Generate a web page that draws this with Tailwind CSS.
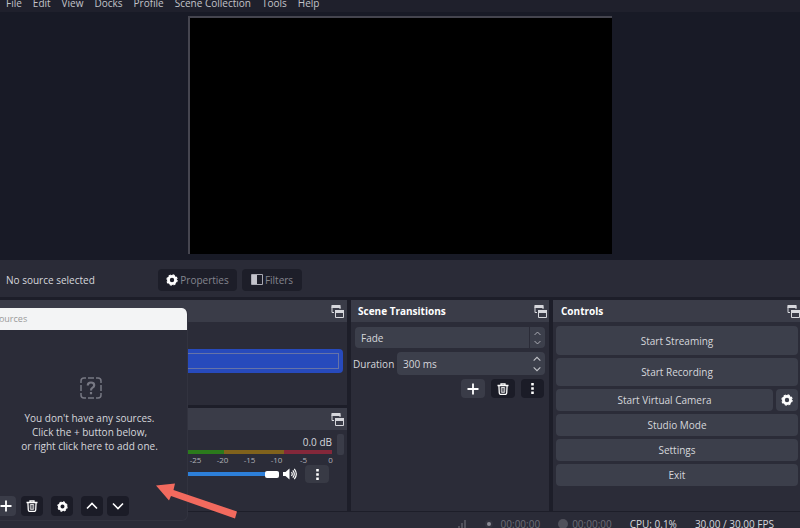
<!DOCTYPE html>
<html lang="en">
<head>
    <meta charset="UTF-8">
    <meta name="viewport" content="width=device-width, initial-scale=1.0">
    <title>OBS Studio</title>
    <script src="https://cdn.jsdelivr.net/npm/@tailwindcss/browser@4"></script>
</head>
<body class="relative flex h-screen flex-col overflow-hidden bg-[#1d1e29] font-['Open_Sans',sans-serif] text-[10px] leading-4 text-[#d6d7dc]">
    <!-- Shared icons -->
    <svg class="hidden">
        <symbol id="popout" viewBox="0 0 13 13">
            <path d="M1 1.500h8v6H1z" fill="none" stroke="currentColor"/>
            <path d="M.5 0h9v3h-9z" fill="currentColor"/>
            <path d="M3 4h10v9H3z" fill="#3a3c48"/>
            <path d="M4.500 6.500h8v6h-8z" fill="none" stroke="currentColor"/>
            <path d="M4 5h9v3H4z" fill="currentColor"/>
        </symbol>
        <symbol id="gear" viewBox="0 0 12 12">
            <circle cx="6" cy="6" r="3.600" fill="none" stroke="currentColor" stroke-width="2.800"/>
            <circle cx="6" cy="6" r="5.100" fill="none" stroke="currentColor" stroke-width="1.200" stroke-dasharray="2.200 1.805"/>
        </symbol>
        <symbol id="plus" viewBox="0 0 12 12">
            <path d="M6 .5v11M.5 6h11" stroke="currentColor" stroke-width="1.800"/>
        </symbol>
        <symbol id="trash" viewBox="0 0 12 12">
            <path d="M.5 2.500h11M4 2.500V.8h4v1.700M1.900 2.500l.4 7.500q.1 1.400 1.400 1.400h4.600q1.300 0 1.400-1.400l.4-7.500" fill="none" stroke="currentColor" stroke-width="1.300"/>
            <path d="M4.300 4.500h3.400v4.800H4.300zM6 4.500v4.800" fill="none" stroke="currentColor" stroke-width=".8"/>
        </symbol>
        <symbol id="dots" viewBox="0 0 12 12">
            <path d="M4.600 0h2.800v2.800H4.600zM4.600 4.600h2.800v2.800H4.600zM4.600 9.200h2.800V12H4.600z" fill="currentColor"/>
        </symbol>
        <symbol id="up" viewBox="0 0 12 12">
            <path d="M1 8.500l5-5 5 5" fill="none" stroke="currentColor" stroke-width="1.600"/>
        </symbol>
        <symbol id="down" viewBox="0 0 12 12">
            <path d="M1 3.500l5 5 5-5" fill="none" stroke="currentColor" stroke-width="1.600"/>
        </symbol>
    </svg>

    <!-- Menu bar -->
    <nav class="flex h-3 shrink-0 items-end gap-[11px] bg-[#1f202c] pb-px pl-1.5 text-[#c3c4ca]">
        <a href="#">File</a>
        <a href="#">Edit</a>
        <a href="#">View</a>
        <a href="#">Docks</a>
        <a href="#">Profile</a>
        <a href="#">Scene Collection</a>
        <a href="#">Tools</a>
        <a href="#">Help</a>
    </nav>

    <!-- Preview -->
    <main class="flex min-h-0 flex-1 justify-center bg-[#181a26] pt-1 pb-1.5">
        <div class="aspect-video h-full border-t-2 border-l-2 border-[#45454f] bg-black"></div>
    </main>

    <!-- Source toolbar -->
    <div class="flex h-[37px] shrink-0 items-center bg-[#2a2b37] pt-0.5 pl-1.5">
        <span class="w-[152px]">No source selected</span>
        <button class="mr-[5px] flex h-[22px] w-[79px] items-center justify-center gap-0.5 rounded bg-[#1d1e29] text-[#84858e]">
            <svg class="size-3 text-white"><use href="#gear"/></svg>Properties
        </button>
        <button class="flex h-[22px] w-[60px] items-center justify-center gap-0.5 rounded bg-[#1d1e29] text-[#84858e]">
            <svg class="h-[11px] w-3" viewBox="0 0 12 11"><path d="M.5.5h11v10H.5z" fill="none" stroke="#a9a9b3"/><path d="M1 1h5v9H1z" fill="#c4c4cc"/></svg>Filters
        </button>
    </div>

    <!-- Docks -->
    <div class="mt-[3px] grid h-[211px] shrink-0 grid-cols-[347fr_198fr_247fr] gap-1">
        <div class="flex flex-col gap-[3px]">
            <section class="h-[105px] bg-[#2b2c38]">
                <header class="flex h-[22px] items-center justify-end bg-[#3a3c48] pr-[3px]">
                    <svg class="size-[13px]"><use href="#popout"/></svg>
                </header>
                <div class="mt-[27px] mr-1 h-6 rounded-sm bg-[#274abc] py-1 pr-1">
                    <div class="h-4 border border-[#6673a8]"></div>
                </div>
            </section>
            <section class="flex-1 bg-[#2b2c38]">
                <header class="flex h-[22px] items-center justify-end bg-[#3a3c48] pr-[3px]">
                    <svg class="size-[13px]"><use href="#popout"/></svg>
                </header>
                <div class="mt-1 flex justify-end gap-[5px] pr-[3px]">
                    <div class="flex-1">
                        <div class="text-right">0.0 dB</div>
                        <div class="flex h-1 justify-end">
                            <div class="flex-1 bg-[#2b7a1c]"></div>
                            <div class="w-[60px] bg-[#80621c]"></div>
                            <div class="w-[48px] bg-[#84283a]"></div>
                        </div>
                        <div class="-mr-3 flex justify-end text-center text-[8px] leading-[11px] text-[#b0b1b8]">
                            <span class="w-[27px]">-25</span><span class="w-[27px]">-20</span><span class="w-[27px]">-15</span><span class="w-[27px]">-10</span><span class="w-[27px]">-5</span><span class="w-[27px]">0</span>
                        </div>
                    </div>
                    <div class="h-[21px] w-[7px] rounded-xs bg-[#3a3c48]"></div>
                </div>
                <div class="flex items-center justify-end pr-[18px]">
                    <input type="range" aria-label="Volume" value="100" class="h-1 flex-1 appearance-none bg-[#2d7fd9] [&::-webkit-slider-thumb]:h-[7px] [&::-webkit-slider-thumb]:w-3.5 [&::-webkit-slider-thumb]:appearance-none [&::-webkit-slider-thumb]:rounded-xs [&::-webkit-slider-thumb]:bg-white">
                    <button aria-label="Mute" class="mr-2 ml-1">
                        <svg class="h-3 w-3.5" viewBox="0 0 14 12"><path d="M0 4h2.500L6.500.5v11L2.500 8H0z" fill="#fff"/><path d="M8.500 4q1.500 2 0 4M9.800 2.300q3 3.700 0 7.400M11.300.8q4 5.200 0 10.400" fill="none" stroke="#fff" stroke-width="1.200"/></svg>
                    </button>
                    <button aria-label="Mixer options" class="flex h-[18px] w-6 items-center justify-center rounded-sm bg-[#383a45] text-white"><svg class="size-[11px]"><use href="#dots"/></svg></button>
                </div>
            </section>
        </div>

        <section class="bg-[#2b2c38]">
            <header class="flex h-[22px] items-center justify-between bg-[#3a3c48] pr-0.5 pl-[7px]">
                <h2 class="font-bold text-white">Scene Transitions</h2>
                <svg class="size-[13px]"><use href="#popout"/></svg>
            </header>
            <div class="relative mx-1 mt-[5px]">
                <select aria-label="Transition" class="h-[21px] w-full appearance-none rounded-sm bg-[#3c3f4b] pl-1.5">
                    <option>Fade</option>
                </select>
                <div class="pointer-events-none absolute inset-y-0 right-0 flex w-4 flex-col items-center justify-center gap-0.5 border-l border-[#2b2c38] text-[#b5b6bd]">
                    <svg class="size-[7px]"><use href="#up"/></svg>
                    <svg class="size-[7px]"><use href="#down"/></svg>
                </div>
            </div>
            <div class="relative mt-1 mr-1 ml-0.5 flex items-center">
                <label for="duration" class="w-11 shrink-0">Duration</label>
                <input id="duration" value="300 ms" class="h-[23px] w-0 flex-1 rounded-sm bg-[#3c3f4b] pl-1.5">
                <div class="absolute right-1 flex flex-col gap-0.5 text-[#c3c4ca]">
                    <svg class="size-2"><use href="#up"/></svg>
                    <svg class="size-2"><use href="#down"/></svg>
                </div>
            </div>
            <div class="mt-1 mr-[5px] flex justify-end gap-1.5 text-white">
                <button aria-label="Add transition" class="flex h-[19px] w-6 items-center justify-center rounded-sm bg-[#3a3c48]"><svg class="size-3"><use href="#plus"/></svg></button>
                <button aria-label="Remove transition" class="flex h-[19px] w-6 items-center justify-center rounded-sm bg-[#1b1c27]"><svg class="size-3"><use href="#trash"/></svg></button>
                <button aria-label="Transition options" class="flex h-[19px] w-[23px] items-center justify-center rounded-sm bg-[#1b1c27]"><svg class="size-[11px]"><use href="#dots"/></svg></button>
            </div>
        </section>

        <section class="bg-[#2b2c38]">
            <header class="flex h-[22px] items-center justify-between bg-[#3a3c48] pl-2">
                <h2 class="font-bold text-white">Controls</h2>
                <svg class="size-[13px]"><use href="#popout"/></svg>
            </header>
            <div class="mt-1 mr-0.5 ml-[3px] flex flex-col gap-[3px]">
                <button class="h-[29px] rounded-sm bg-[#3c3f4b]">Start Streaming</button>
                <button class="h-7 rounded-sm bg-[#3c3f4b]">Start Recording</button>
                <div class="flex gap-[3px]">
                    <button class="h-[22px] flex-1 rounded-sm bg-[#3c3f4b]">Start Virtual Camera</button>
                    <button aria-label="Virtual camera settings" class="flex w-[22px] items-center justify-center rounded-sm bg-[#3c3f4b] text-white"><svg class="size-3"><use href="#gear"/></svg></button>
                </div>
                <button class="h-[22px] rounded-sm bg-[#3c3f4b]">Studio Mode</button>
                <button class="h-[22px] rounded-sm bg-[#3c3f4b]">Settings</button>
                <button class="h-[22px] rounded-sm bg-[#3c3f4b]">Exit</button>
            </div>
        </section>
    </div>

    <!-- Status bar -->
    <footer class="mt-px flex h-4 shrink-0 items-start justify-end bg-[#2a2b37] pt-1 pr-[26px] text-[#6d6e78]">
        <div class="mr-[18px] pt-1">
            <svg class="h-3 w-3" viewBox="0 0 12 12" fill="#50515b"><path d="M0 9h2v3H0zM3 6h2v6H3zM6 3h2v9H6zM9 0h2v12H9z"/></svg>
        </div>
        <div class="mr-[18px] flex items-center gap-2">
            <svg class="size-2" viewBox="0 0 8 8"><circle cx="4" cy="4" r="4" fill="#32333e"/><circle cx="4" cy="4" r="2" fill="#8b8c95"/></svg>00:00:00
        </div>
        <div class="mr-[18px] flex items-center gap-1">
            <span class="size-2.5 rounded-full bg-[#50515b]"></span>00:00:00
        </div>
        <span class="mr-[18px] text-[#d6d7dc]">CPU: 0.1%</span>
        <span class="text-[#d6d7dc]">30.00 / 30.00 FPS</span>
    </footer>

    <!-- Floating Sources window -->
    <section class="absolute bottom-[7px] left-0 flex h-[213px] w-[188px] flex-col overflow-hidden rounded-r-md border-r border-b border-[#32333f] bg-[#2b2c38]">
        <header class="-mr-px h-[22px] shrink-0 bg-[#f3f4f5] text-[9px] leading-[22px] text-[#9a9a9a]">
            <h2 class="-ml-[6px]">Sources</h2>
        </header>
        <div class="flex flex-1 flex-col items-center pt-[47px] text-center leading-[14px]">
            <svg class="mb-3 ml-[-6px] size-[22px] shrink-0" viewBox="0 0 22 22" fill="none" stroke="#777883" stroke-width="1.500">
                <path d="M1 6V4q0-3 3-3h2M8 1h6M16 1h2q3 0 3 3v2M21 8v6M21 16v2q0 3-3 3h-2M14 21H8M6 21H4q-3 0-3-3v-2M1 14V8"/>
                <path d="M7.800 8.500q0-3 3.200-3t3.200 2.700q0 1.500-1.600 2.400T11 13.500M11 15v2.200" stroke-width="2.200"/>
            </svg>
            <p class="ml-[-8px]">You don't have any sources.<br>Click the + button below,<br>or right click here to add one.</p>
        </div>
        <div class="mb-1 flex h-5 text-white">
            <button aria-label="Add source" class="mr-[5px] flex w-4 items-center rounded-r-sm bg-[#3a3c48]"><svg class="size-3"><use href="#plus"/></svg></button>
            <button aria-label="Remove source" class="mr-2 flex w-[22px] items-center justify-center rounded-sm bg-[#1b1c27]"><svg class="size-3"><use href="#trash"/></svg></button>
            <button aria-label="Source properties" class="mr-2 flex w-[22px] items-center justify-center rounded-sm bg-[#1b1c27]"><svg class="size-[11px]"><use href="#gear"/></svg></button>
            <button aria-label="Move up" class="mr-1 flex w-[22px] items-center justify-center rounded-sm bg-[#1b1c27]"><svg class="size-3"><use href="#up"/></svg></button>
            <button aria-label="Move down" class="flex w-[22px] items-center justify-center rounded-sm bg-[#1b1c27]"><svg class="size-3"><use href="#down"/></svg></button>
        </div>
    </section>

    <!-- Pointer arrow -->
    <svg class="absolute bottom-2 left-[155px] h-[38px] w-[84px]" viewBox="0 0 84 38">
        <path d="M1 3.500L20 1.500l-1.500 6.500L82 29.500l-2 7L16 14l-2 4.500z" fill="#f26a5e"/>
    </svg>
</body>
</html>
